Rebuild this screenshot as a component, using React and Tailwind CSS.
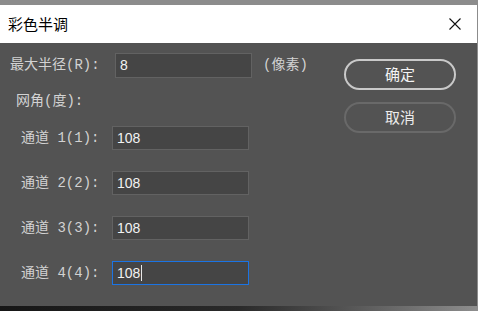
import React from 'react'

const font = { fontFamily: '"Noto Sans CJK SC", "Liberation Sans", sans-serif' }
const labelFont = { fontFamily: '"Liberation Mono", "Noto Sans CJK SC", monospace' }

function Field({ value, focused, tall }) {
  return (
    <div
      className={`${tall ? 'h-[25px]' : 'h-[24px]'} w-[137px] flex items-center pl-[4px] text-[14px] text-[#f2f2f2] bg-[#454545] border ${
        focused ? 'border-[#1b74e4]' : 'border-[#626262]'
      }`}
      style={{ fontFamily: '"Liberation Sans", sans-serif' }}
    >
      {value}
      {focused && <span className="ml-[1px] w-px h-[16px] bg-[#e8e8e8]" />}
    </div>
  )
}

function ChannelRow({ n, focused, first }) {
  return (
    <div className={`flex items-center ${first ? 'mt-[15px]' : 'mt-[21px]'}`}>
      <div className="w-[102px] pl-[11px] text-[14px] text-[#d2d2d2] whitespace-nowrap" style={labelFont}>
        通道 {n}({n}):
      </div>
      <Field value="108" focused={focused} />
    </div>
  )
}

export default function App() {
  return (
    <div className="w-[478px] h-[311px] bg-[#8c8c8c] flex flex-col overflow-hidden" style={font}>
      <div className="h-[5px] shrink-0" />
      <div className="mr-[1px] flex flex-col">
        {/* title bar */}
        <div className="h-[38px] bg-white flex items-center justify-between pl-[8px] pr-[16px]">
          <span className="text-[15px] text-black">彩色半调</span>
          <svg width="12" height="12" viewBox="0 0 12 12">
            <path d="M0.5 0.5 L11.5 11.5 M11.5 0.5 L0.5 11.5" stroke="#111" strokeWidth="1.1" fill="none" />
          </svg>
        </div>

        {/* body */}
        <div className="h-[263px] bg-[#535353] flex">
          <div className="w-[344px] pl-[10px] pt-[10px] flex flex-col">
            <div className="flex items-center h-[25px]">
              <div className="w-[105px] text-[14px] text-[#d2d2d2] whitespace-nowrap" style={labelFont}>
                最大半径(R):
              </div>
              <Field value="8" tall />
              <div className="ml-[11px] text-[14px] text-[#d2d2d2] whitespace-nowrap" style={labelFont}>
                (像素)
              </div>
            </div>
            <div className="mt-[13px] h-[20px] pl-[6px] flex items-center text-[14px] text-[#d2d2d2] whitespace-nowrap" style={labelFont}>
              网角(度):
            </div>
            <ChannelRow n={1} first />
            <ChannelRow n={2} />
            <ChannelRow n={3} />
            <ChannelRow n={4} focused />
          </div>

          <div className="pt-[16px] flex flex-col gap-[12px]">
            <button className="w-[112px] h-[31px] rounded-full border-2 border-[#c9c9c9] text-[15px] text-[#f4f4f4] flex items-center justify-center">
              确定
            </button>
            <button className="w-[112px] h-[31px] rounded-full border-2 border-[#696969] text-[15px] text-[#ececec] flex items-center justify-center">
              取消
            </button>
          </div>
        </div>
      </div>
      <div className="flex-1 bg-gradient-to-r from-[#161616] via-[#2a2a2a] to-[#8e8e8e]" />
    </div>
  )
}
